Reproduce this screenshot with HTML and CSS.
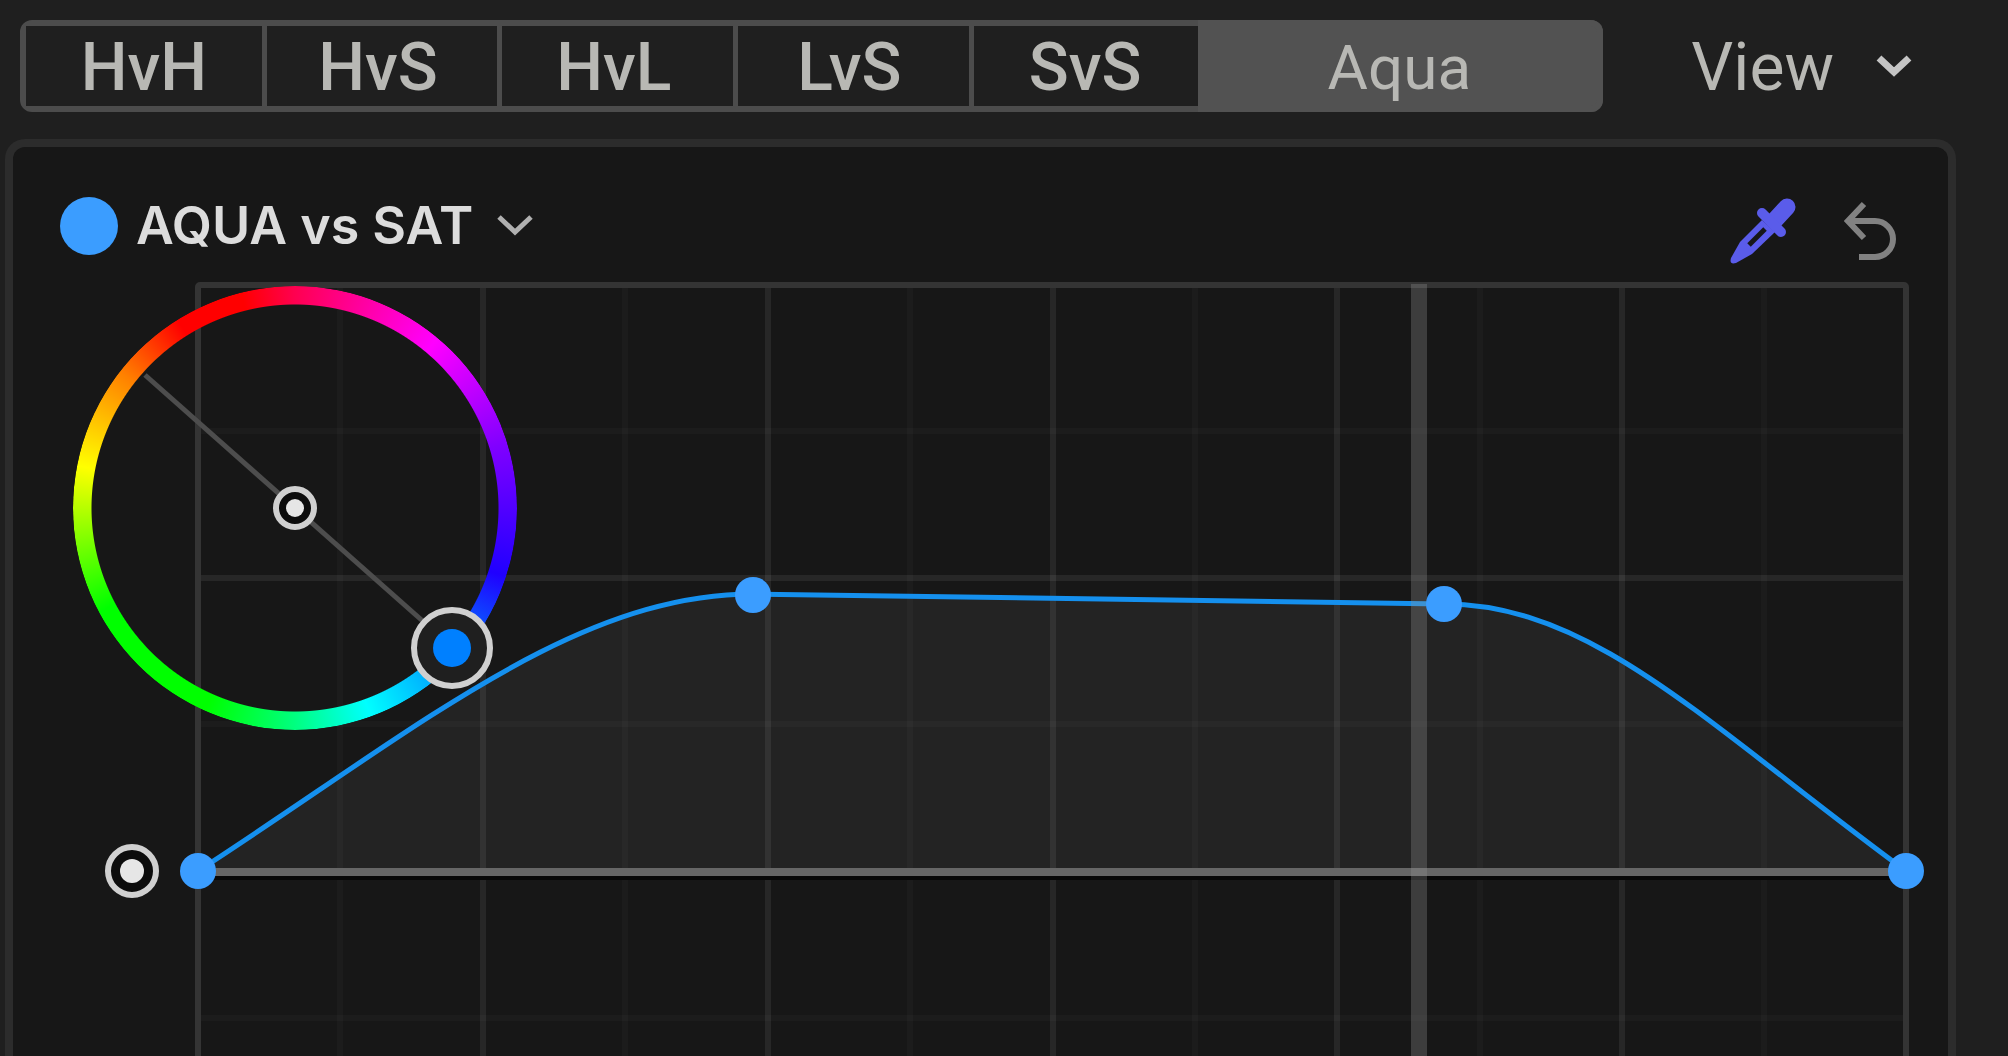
FILE: index.html
```
<!DOCTYPE html>
<html lang="en">
<head>
    <meta charset="UTF-8">
    <meta name="viewport" content="width=device-width, initial-scale=1.0">
    <title>Hue/Saturation Curves</title>
    <link rel="stylesheet" href="styles.css">
</head>
<body>
    <div class="toolbar">
        <div class="segments">
            <button class="segment">HvH</button>
            <button class="segment">HvS</button>
            <button class="segment">HvL</button>
            <button class="segment">LvS</button>
            <button class="segment">SvS</button>
            <button class="segment active">Aqua</button>
        </div>
        <button class="view">
            View
            <svg class="chevron" viewBox="0 0 36 22"><path d="M3 1l15 14L33 1"/></svg>
        </button>
    </div>

    <div class="panel">
        <div class="panel-header">
            <span class="swatch"></span>
            <button class="curve-menu">
                AQUA vs SAT
                <svg class="chevron thin" viewBox="0 0 36 22"><path d="M2 2l16 15L34 2"/></svg>
            </button>
            <div class="tools">
                <button class="tool" aria-label="Pick color">
                    <svg class="eyedropper" viewBox="0 0 70 70">
                        <path class="tube" d="M34 24L12 46L3 62Q1 69 8 67L24 58L47 36Z"/>
                        <path class="bulb" d="M59 11L47 24"/>
                        <path class="collar" d="M34 17L53 36"/>
                        <path class="slit" d="M37 33L21 49"/>
                    </svg>
                </button>
                <button class="tool" aria-label="Reset curve">
                    <svg class="undo" viewBox="0 0 54 60">
                        <path d="M20 3L4 20L20 37M4 20H31a18 18 0 0 1 0 36H15"/>
                    </svg>
                </button>
            </div>
        </div>

        <svg class="graph" viewBox="0 0 1935 1200">
            <path class="area" d="M185 599C400 460 560 322 740 322L1431 332C1580 332 1693 452 1893 599Z"/>

            <!-- grid -->
            <path class="grid-minor" d="M327 13V1186M612 13V1186M897 13V1186M1182 13V1186M1467 13V1186M1751 13V1186"/>
            <path class="grid-minor" d="M185 159H1893M185 452H1893M185 746H1893M185 1039H1893"/>
            <path class="grid-major" d="M470 13V1186M755 13V1186M1040 13V1186M1324 13V1186M1609 13V1186"/>
            <path class="grid-major" d="M185 306H1893M185 892H1893"/>
            <rect class="frame" x="185" y="13" width="1708" height="1173" rx="2"/>

            <!-- curve -->
            <path class="baseline-shadow" d="M185 606H1893"/>
            <path class="baseline" d="M185 600H1893"/>
            <path class="curve" d="M185 599C400 460 560 322 740 322L1431 332C1580 332 1693 452 1893 599"/>
            <path class="marker" d="M1406 12V1186"/>
            <circle class="point" cx="185" cy="599" r="18"/>
            <circle class="point" cx="740" cy="323" r="18"/>
            <circle class="point" cx="1431" cy="332" r="18"/>
            <circle class="point" cx="1893" cy="599" r="18"/>

            <!-- hue wheel -->
            <foreignObject x="60" y="14" width="444" height="444">
                <div class="wheel"></div>
            </foreignObject>
            <path class="axis" d="M132 103L439 375"/>
            <circle class="ring" cx="282" cy="236" r="19"/>
            <circle class="dot" cx="282" cy="236" r="9"/>
            <circle class="ring knob" cx="439" cy="376" r="38"/>
            <circle class="hue" cx="439" cy="376" r="19"/>

            <circle class="ring" cx="119" cy="599" r="24"/>
            <circle class="dot" cx="119" cy="599" r="12"/>
        </svg>
    </div>
</body>
</html>
```
FILE: styles.css
```
* {
    box-sizing: border-box;
}

body {
    display: flex;
    flex-direction: column;
    height: 100vh;
    margin: 0;
    overflow: hidden;
    background: #1f1f1f;
    color: #b8b8b4;
    font-family: Roboto, "Liberation Sans", sans-serif;
}

button {
    padding: 0;
    border: none;
    background: none;
    color: inherit;
    font: inherit;
    cursor: pointer;
}

svg {
    display: block;
}

.toolbar {
    display: flex;
    align-items: center;
    gap: 88px;
    padding: 20px 96px 27px 20px;
    font-size: 66px;
    line-height: 74px;
}

.segments {
    display: grid;
    grid-template-columns: repeat(5, 3fr) 5fr;
    flex: 1;
    height: 92px;
    border: 6px solid #4c4c4c;
    border-radius: 12px;
    background: #4c4c4c;
}

.segment {
    padding-top: 4px;
    background: #1f1f1f;
    font-weight: 500;
}

.segment + .segment {
    padding-right: 8px;
    border-left: 5px solid #4c4c4c;
}

.segment.active {
    background: #525252;
    box-shadow: 0 0 0 6px #525252;
    border-radius: 0 6px 6px 0;
    border-color: #525252;
    font-size: 62px;
    font-weight: 400;
}

.view {
    display: flex;
    align-items: center;
    gap: 42px;
    padding-top: 4px;
}

.chevron {
    width: 36px;
    height: 22px;
    fill: none;
    stroke: #c4c4c4;
    stroke-width: 7;
    overflow: visible;
}

.chevron.thin {
    stroke: #b0b0b0;
    stroke-width: 5;
}

.panel {
    flex: 1;
    min-height: 0;
    margin: 0 52px 0 5px;
    border: 8px solid #2c2c2c;
    border-bottom: none;
    border-radius: 20px 20px 0 0;
    background: #171717;
    overflow: hidden;
}

.panel-header {
    display: flex;
    align-items: center;
    height: 125px;
    padding: 32px 50px 0 47px;
}

.swatch {
    width: 58px;
    height: 58px;
    margin-right: 18px;
    border-radius: 50%;
    background: #3b9dff;
}

.curve-menu {
    display: flex;
    align-items: center;
    gap: 24px;
    color: #dcdcdc;
    font-family: Inter, "Liberation Sans", sans-serif;
    font-size: 52px;
    font-weight: 600;
}

.tools {
    display: flex;
    align-items: center;
    gap: 46px;
    margin-left: auto;
    padding-top: 10px;
}

.eyedropper {
    width: 70px;
    height: 70px;
    fill: none;
    stroke: #5a5cea;
    stroke-linecap: round;
}

.tube {
    fill: #5a5cea;
    stroke: none;
}

.bulb {
    stroke-width: 17;
}

.collar {
    stroke-width: 10;
}

.slit {
    stroke: #171717;
    stroke-width: 5;
    stroke-linecap: butt;
}

.undo {
    width: 54px;
    height: 60px;
    fill: none;
    stroke: #828282;
    stroke-width: 6;
}

.graph {
    width: 100%;
    height: auto;
    fill: none;
}

.area {
    fill: #232323;
}

.grid-minor {
    stroke: rgba(255, 255, 255, 0.025);
    stroke-width: 6;
}

.grid-major {
    stroke: rgba(255, 255, 255, 0.07);
    stroke-width: 6;
}

.frame {
    stroke: #343434;
    stroke-width: 6;
}

.baseline {
    stroke: #666666;
    stroke-width: 8;
}

.baseline-shadow {
    stroke: #080808;
    stroke-width: 4;
}

.curve {
    stroke: #1590ee;
    stroke-width: 5;
}

.marker {
    stroke: rgba(150, 150, 150, 0.3);
    stroke-width: 16;
}

.point {
    fill: #3b9dff;
}

.wheel {
    width: 100%;
    height: 100%;
    border-radius: 50%;
    background: conic-gradient(#ff0050, #ff00ff 40deg, #8000ff 73deg, #2000ff 108deg, #0080ff 131deg, #00ffff 160deg, #00ff80 180deg, #00ff00 204deg, #00ff00 242deg, #ffff00 281deg, #ff8000 308deg, #ff0000 328deg, #ff0000 346deg, #ff0050 360deg);
    mask: radial-gradient(closest-side, transparent 203px, black 204px);
}

.axis {
    stroke: #4d4d4d;
    stroke-width: 5;
}

.ring {
    fill: #0c0c0c;
    stroke: #d0d0d0;
    stroke-width: 6;
}

.ring.knob {
    fill: #1f1f1f;
}

.dot {
    fill: #e6e6e6;
}

.hue {
    fill: #0080ff;
}
```
